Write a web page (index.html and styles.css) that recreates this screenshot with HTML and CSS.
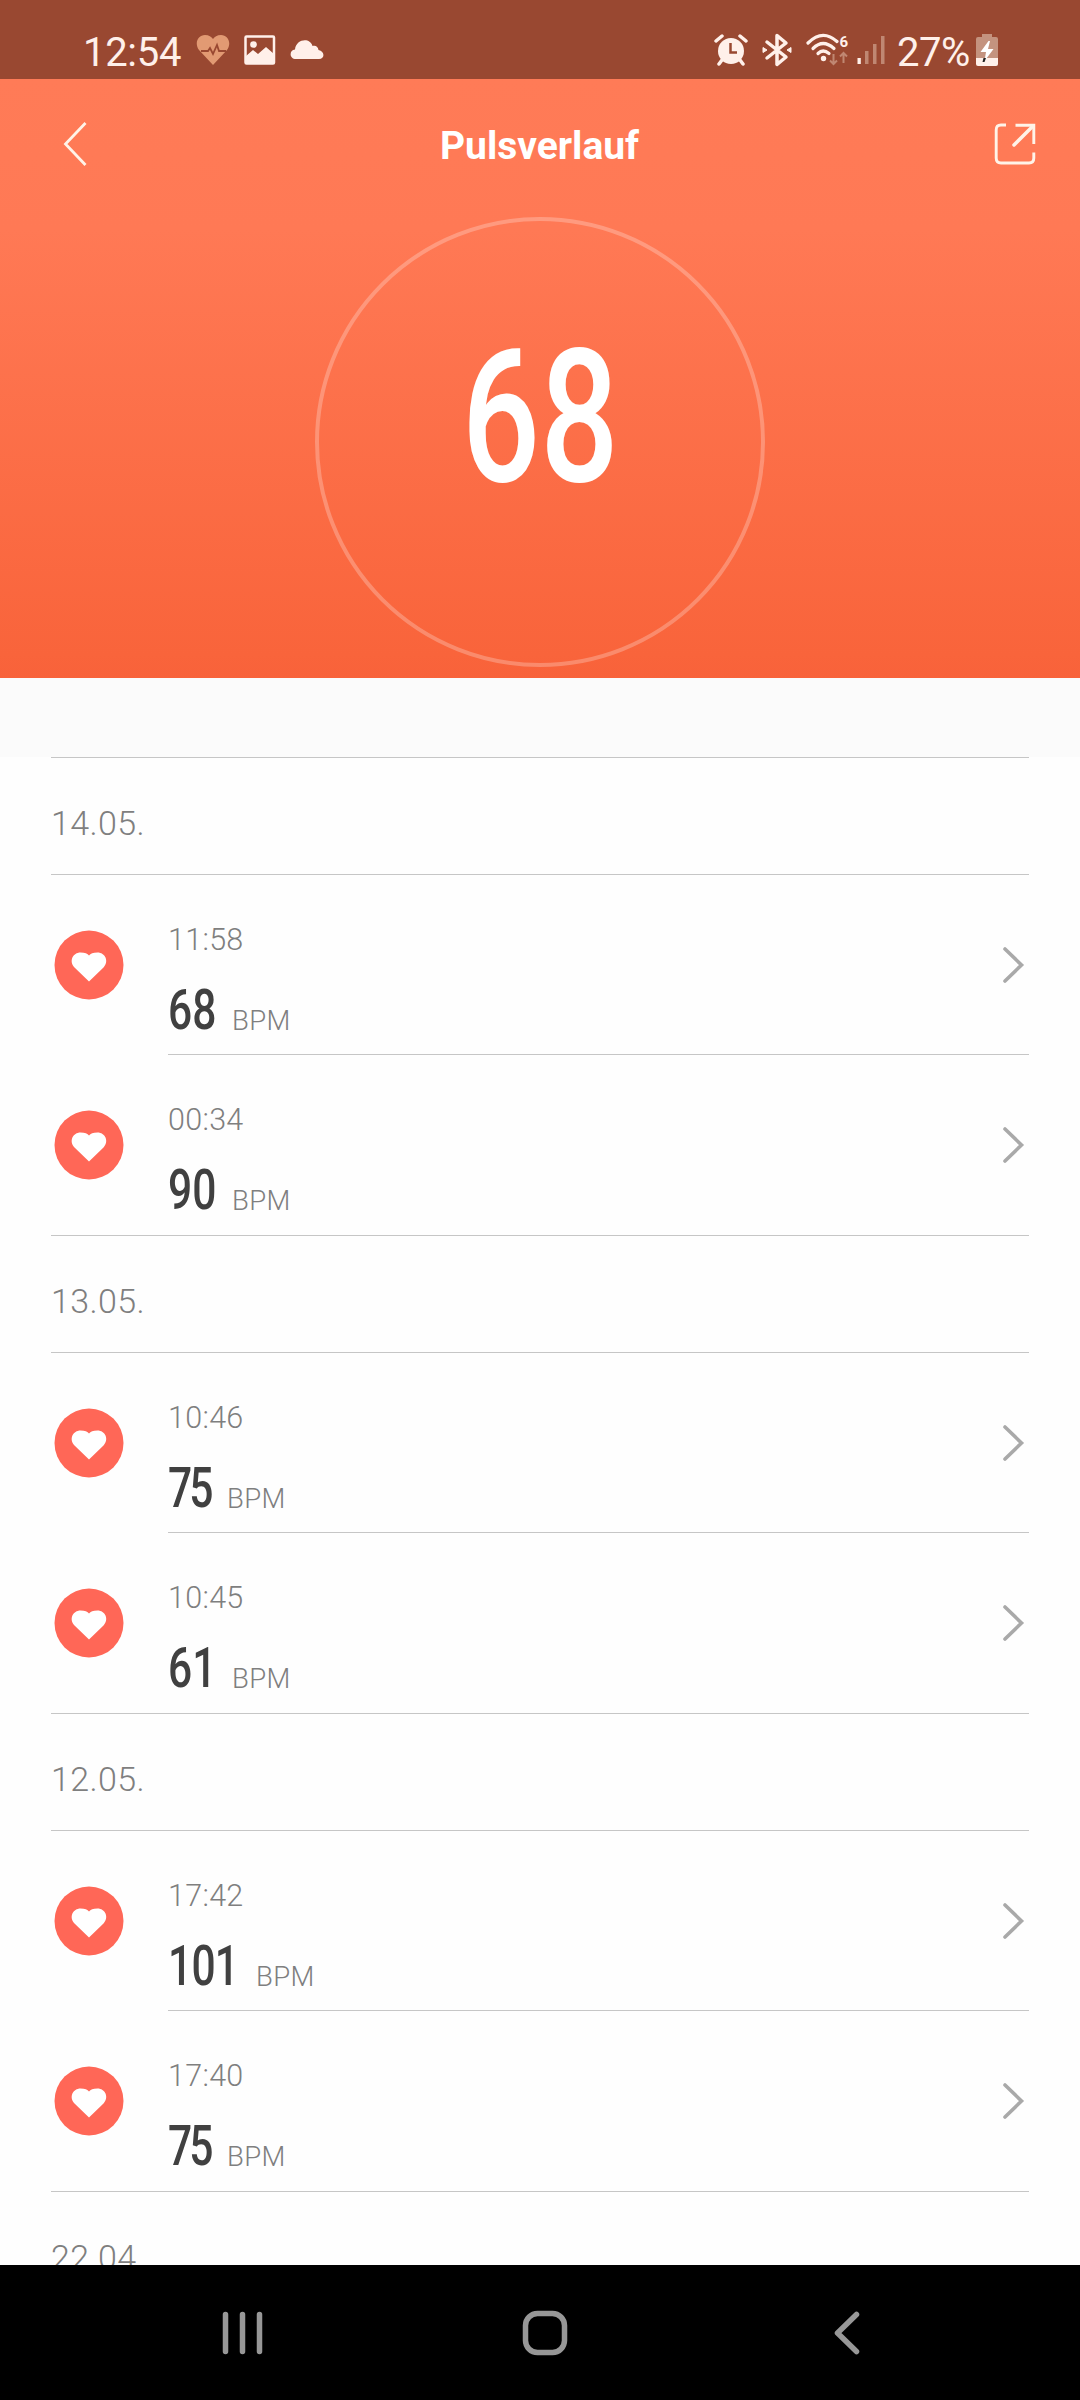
FILE: index.html
```html
<!DOCTYPE html>
<html lang="de">

<head>
    <meta charset="UTF-8">
    <meta name="viewport" content="width=device-width, initial-scale=1.0">
    <title>Pulsverlauf</title>
    <link rel="stylesheet" href="styles.css">
</head>

<body>
    <!-- Shared icons -->
    <svg class="sprite" width="0" height="0">
        <symbol id="heart" viewBox="0 0 70 70">
            <circle cx="35" cy="35" r="34.5" fill="#ff6757" />
            <path d="M35 51.5 L20.5 37.5 C14.500 31 19 22.500 26.500 22.500 C31 22.500 33.500 23.500 35 25.500 C36.500 23.500 39 22.500 43.500 22.500 C51 22.500 55.500 31 49.500 37.500 Z" fill="#fff" />
        </symbol>
        <symbol id="chevron" viewBox="0 0 24 40">
            <path d="M4 4 L20.500 20 L4 36" fill="none" stroke="#a9a9a9" stroke-width="3.600" stroke-linecap="round" />
        </symbol>
    </svg>

    <div class="status-bar">
        <div class="status-left">
            <span class="clock">12:54</span>
            <svg width="34" height="32" viewBox="0 0 34 32">
                <path d="M17 31 L3 16 C-2 9 2 1 9 1 C13 1 15.500 3 17 5 C18.500 3 21 1 25 1 C32 1 36 9 31 16 Z" fill="#e29a73" />
                <path d="M5 17 H12 L14 14 L17 20 L21 11 L23 17 H30" fill="none" stroke="#994831" stroke-width="1.800" />
            </svg>
            <svg width="32" height="30" viewBox="0 0 32 30">
                <rect x="1.500" y="1.500" width="28.500" height="27" rx="1" fill="none" stroke="#fff0ea" stroke-width="2.500" />
                <circle cx="9.500" cy="9.500" r="3.300" fill="#fff0ea" />
                <path d="M2 21 L9 15 L14 19 L22 12 L30 19 V28 H2 Z" fill="#fff0ea" />
            </svg>
            <svg width="34" height="20" viewBox="0 0 34 20">
                <path d="M6 19 C-1 19 -1 10 5 9.500 C6 -1 20 -3 22.500 6 C26 5 28 7 28.500 10 C35 11 35 19 29 19 Z" fill="#fff0ea" />
            </svg>
        </div>
        <div class="status-right">
            <svg width="34" height="32" viewBox="0 0 34 32">
                <path d="M2 7 L8 2 M26 2 L32 7 M8 26 L5 30 M26 26 L29 30" stroke="#fff0ea" stroke-width="3.500" stroke-linecap="round" />
                <circle cx="17" cy="17" r="13" fill="#fff0ea" />
                <path d="M16.500 9 V18.500 H23" fill="none" stroke="#994831" stroke-width="2.500" />
            </svg>
            <svg class="bluetooth" width="30" height="34" viewBox="0 0 30 34">
                <path d="M5 9 L24 24 L15 31.500 V2.500 L24 10 L5 25" fill="none" stroke="#fff0ea" stroke-width="3.500" stroke-linejoin="round" stroke-linecap="round" />
                <path d="M1 14.500 L5 17 L1 19.500 Z M29 14.500 L25 17 L29 19.500 Z" fill="#fff0ea" stroke="#fff0ea" />
            </svg>
            <svg class="wifi" width="44" height="34" viewBox="0 0 44 34">
                <g fill="none" stroke="#fff0ea" stroke-width="3.200" stroke-linecap="round">
                    <path d="M3 10 Q17.500 -4.500 32 8.500" />
                    <path d="M8 15.500 Q18 5.500 29 15.500" />
                    <path d="M13 20.500 Q18 15.500 24 20.500" />
                </g>
                <circle cx="18.500" cy="25.500" r="2.700" fill="#fff0ea" />
                <text x="34.500" y="13.500" class="wifi-gen">6</text>
                <path d="M28.500 21 V31 M25 27.500 L28.500 31 L32 27.500 M38.500 30 V20 M35 23.500 L38.500 20 L42 23.500" fill="none" stroke="#c08772" stroke-width="2" />
            </svg>
            <svg class="signal" width="28" height="30" viewBox="0 0 28 30">
                <rect x="0.500" y="23" width="3.300" height="6" fill="#fff0ea" />
                <rect x="8" y="16" width="3.500" height="13" fill="#c08772" />
                <rect x="16" y="9" width="3.500" height="20" fill="#c08772" />
                <rect x="24" y="1" width="3.500" height="28" fill="#c08772" />
            </svg>
            <span class="battery-text">27%</span>
            <svg class="battery" width="22" height="32" viewBox="0 0 22 32">
                <path d="M6 0 H16 V3 H20 Q22 3 22 5 V24 H0 V5 Q0 3 2 3 H6 Z" fill="#c4937f" />
                <path d="M0 24 H22 V30 Q22 32 20 32 H2 Q0 32 0 30 Z" fill="#fff0ea" />
                <path d="M12.500 7 L4.500 18 H10 L8.500 27 L17.500 15 H12 L14 7 Z" fill="#fff" />
                <path d="M10 24 L8.500 28 L6.500 28 L7.500 24 Z" fill="#222" />
            </svg>
        </div>
    </div>

    <header class="hero">
        <div class="toolbar">
            <svg width="26" height="48" viewBox="0 0 26 48">
                <path d="M23.500 3 L3.500 24 L23.500 45" fill="none" stroke="#fff3e8" stroke-width="2.800" />
            </svg>
            <h1>Pulsverlauf</h1>
            <svg width="42" height="42" viewBox="0 0 42 42">
                <path d="M12 2 H7 Q2.200 2 2.200 7 V35 Q2.200 40 7 40 H35 Q39.800 40 39.800 35 V29.500 M21.500 2.200 H39.800 V21" fill="none" stroke="#fff3e8" stroke-width="2.900" />
                <path d="M39 3 L20 22" stroke="#fff3e8" stroke-width="3.500" stroke-linecap="round" />
            </svg>
        </div>
        <div class="pulse-circle">
            <span class="pulse-value">68</span>
        </div>
    </header>

    <div class="spacer"></div>

    <main class="history">
        <section class="day">
            <h2>14.05.</h2>
            <div class="entry">
                <svg class="heart"><use href="#heart" /></svg>
                <div class="details">
                    <div class="time">11:58</div>
                    <div class="reading"><span class="bpm">68</span><span class="unit">BPM</span></div>
                </div>
                <svg class="chevron"><use href="#chevron" /></svg>
            </div>
            <div class="entry">
                <svg class="heart"><use href="#heart" /></svg>
                <div class="details">
                    <div class="time">00:34</div>
                    <div class="reading"><span class="bpm">90</span><span class="unit">BPM</span></div>
                </div>
                <svg class="chevron"><use href="#chevron" /></svg>
            </div>
        </section>

        <section class="day">
            <h2>13.05.</h2>
            <div class="entry">
                <svg class="heart"><use href="#heart" /></svg>
                <div class="details">
                    <div class="time">10:46</div>
                    <div class="reading"><span class="bpm narrow">75</span><span class="unit">BPM</span></div>
                </div>
                <svg class="chevron"><use href="#chevron" /></svg>
            </div>
            <div class="entry">
                <svg class="heart"><use href="#heart" /></svg>
                <div class="details">
                    <div class="time">10:45</div>
                    <div class="reading"><span class="bpm">61</span><span class="unit">BPM</span></div>
                </div>
                <svg class="chevron"><use href="#chevron" /></svg>
            </div>
        </section>

        <section class="day">
            <h2>12.05.</h2>
            <div class="entry">
                <svg class="heart"><use href="#heart" /></svg>
                <div class="details">
                    <div class="time">17:42</div>
                    <div class="reading"><span class="bpm wide">101</span><span class="unit">BPM</span></div>
                </div>
                <svg class="chevron"><use href="#chevron" /></svg>
            </div>
            <div class="entry">
                <svg class="heart"><use href="#heart" /></svg>
                <div class="details">
                    <div class="time">17:40</div>
                    <div class="reading"><span class="bpm narrow">75</span><span class="unit">BPM</span></div>
                </div>
                <svg class="chevron"><use href="#chevron" /></svg>
            </div>
        </section>

        <section class="day">
            <h2>22.04.</h2>
        </section>
    </main>

    <nav class="nav-bar">
        <svg width="42" height="46" viewBox="0 0 42 46">
            <path d="M3.500 4.500 V41.500 M20.500 4.500 V41.500 M37.500 4.500 V41.500" stroke="#979797" stroke-width="5.500" stroke-linecap="round" />
        </svg>
        <svg width="46" height="46" viewBox="0 0 46 46">
            <rect x="3.500" y="3.500" width="39" height="39" rx="12" fill="none" stroke="#979797" stroke-width="5.500" />
        </svg>
        <svg width="28" height="46" viewBox="0 0 28 46">
            <path d="M23.500 4.500 L4.500 23 L23.500 41.500" fill="none" stroke="#979797" stroke-width="5.500" stroke-linecap="round" stroke-linejoin="round" />
        </svg>
    </nav>
</body>

</html>
```

FILE: styles.css
```css
body {
    margin: 0;
    width: 1080px;
    height: 2400px;
    display: flex;
    flex-direction: column;
    overflow: hidden;
    font-family: Roboto, "Liberation Sans", sans-serif;
    background-color: #fefefe;
}

svg {
    flex: none;
}

.sprite {
    position: absolute;
}

/* Status bar */
.status-bar {
    flex: none;
    box-sizing: border-box;
    height: 79px;
    padding: 21px 82px 0 83px;
    display: flex;
    justify-content: space-between;
    background-color: #994831;
    color: #fff0ea;
    font-size: 40px;
}

.status-left,
.status-right {
    display: flex;
    align-items: center;
    height: 59px;
}

.status-left {
    gap: 14px;
}

.status-left svg,
.status-right svg {
    margin-bottom: 1px;
}

.clock,
.battery-text {
    line-height: 59px;
    padding-top: 3px;
}

.clock {
    width: 99px;
    letter-spacing: -0.3px;
}

.bluetooth {
    margin-left: 14px;
}

.wifi {
    margin-left: 13px;
}

.wifi-gen {
    font-size: 15px;
    font-weight: bold;
    fill: #fff0ea;
}

.signal {
    margin-left: 8px;
}

.battery-text {
    width: 79px;
    margin-left: 12px;
    letter-spacing: -0.5px;
}

/* Header */
.hero {
    flex: none;
    height: 599px;
    display: flex;
    flex-direction: column;
    align-items: center;
    background: linear-gradient(#ff7b57 0%, #ff7955 25%, #f9643b 96%, #f8623a 100%);
    color: #fff;
}

.toolbar {
    box-sizing: border-box;
    width: 100%;
    height: 129px;
    padding: 0 44px 0 62px;
    display: flex;
    align-items: center;
    justify-content: space-between;
}

h1 {
    margin: 4px 0 0 -3px;
    font-size: 39px;
    font-weight: bold;
}

.pulse-circle {
    box-sizing: border-box;
    width: 450px;
    height: 450px;
    margin-top: 9px;
    border: 4px solid rgba(255, 255, 255, 0.25);
    border-radius: 50%;
    display: flex;
    justify-content: center;
}

.pulse-value {
    height: 220px;
    margin-top: 87px;
    line-height: 220px;
    font-size: 185px;
    font-weight: 500;
    transform: scaleX(0.745);
}

.spacer {
    flex: none;
    height: 79px;
    background-color: #fbfbfb;
}

/* Measurement list */
.history {
    flex: 1;
    overflow: hidden;
    padding: 0 51px;
}

.day h2 {
    box-sizing: border-box;
    height: 117px;
    margin: 0;
    border-top: 1px solid #c6c6c6;
    line-height: 130px;
    font-size: 34px;
    font-weight: 300;
    letter-spacing: 0.4px;
    color: #7f7f7f;
}

.entry {
    box-sizing: border-box;
    height: 180px;
    display: flex;
    align-items: center;
    border-top: 1px solid #c6c6c6;
}

.entry + .entry {
    height: 181px;
    border-top: none;
    background: linear-gradient(#c6c6c6, #c6c6c6) 117px 0 / 861px 1px no-repeat;
}

.entry + .entry .details {
    padding-top: 46px;
}

.heart {
    width: 70px;
    height: 70px;
    margin: 0 44px 0 3px;
}

.details {
    flex: 1;
    align-self: stretch;
    padding-top: 45px;
}

.time {
    height: 40px;
    line-height: 40px;
    font-size: 30.5px;
    font-weight: 300;
    letter-spacing: 0.3px;
    color: #7f7f7f;
}

.reading {
    height: 68px;
    margin-top: 16px;
    display: flex;
    align-items: baseline;
    line-height: 68px;
}

/* Condensed figures, so the box width is set apart from the glyph width */
.bpm {
    width: 64px;
    font-size: 56px;
    font-weight: 500;
    color: #404040;
    transform: scaleX(0.76);
    transform-origin: left;
}

.bpm.narrow {
    width: 59px;
    letter-spacing: -4px;
}

.bpm.wide {
    width: 88px;
    letter-spacing: -1px;
}

.unit {
    position: relative;
    top: 1px;
    font-size: 27.5px;
    font-weight: 300;
    letter-spacing: 0.4px;
    color: #7f7f7f;
}

.chevron {
    width: 24px;
    height: 40px;
    margin: 0 4px 0 0;
}

/* System navigation */
.nav-bar {
    flex: none;
    box-sizing: border-box;
    height: 135px;
    padding: 45px 0 0 222px;
    display: flex;
    align-items: flex-start;
    background-color: #000;
    gap: 258px;
}

.nav-bar svg:last-child {
    margin-left: 7px;
}
```
